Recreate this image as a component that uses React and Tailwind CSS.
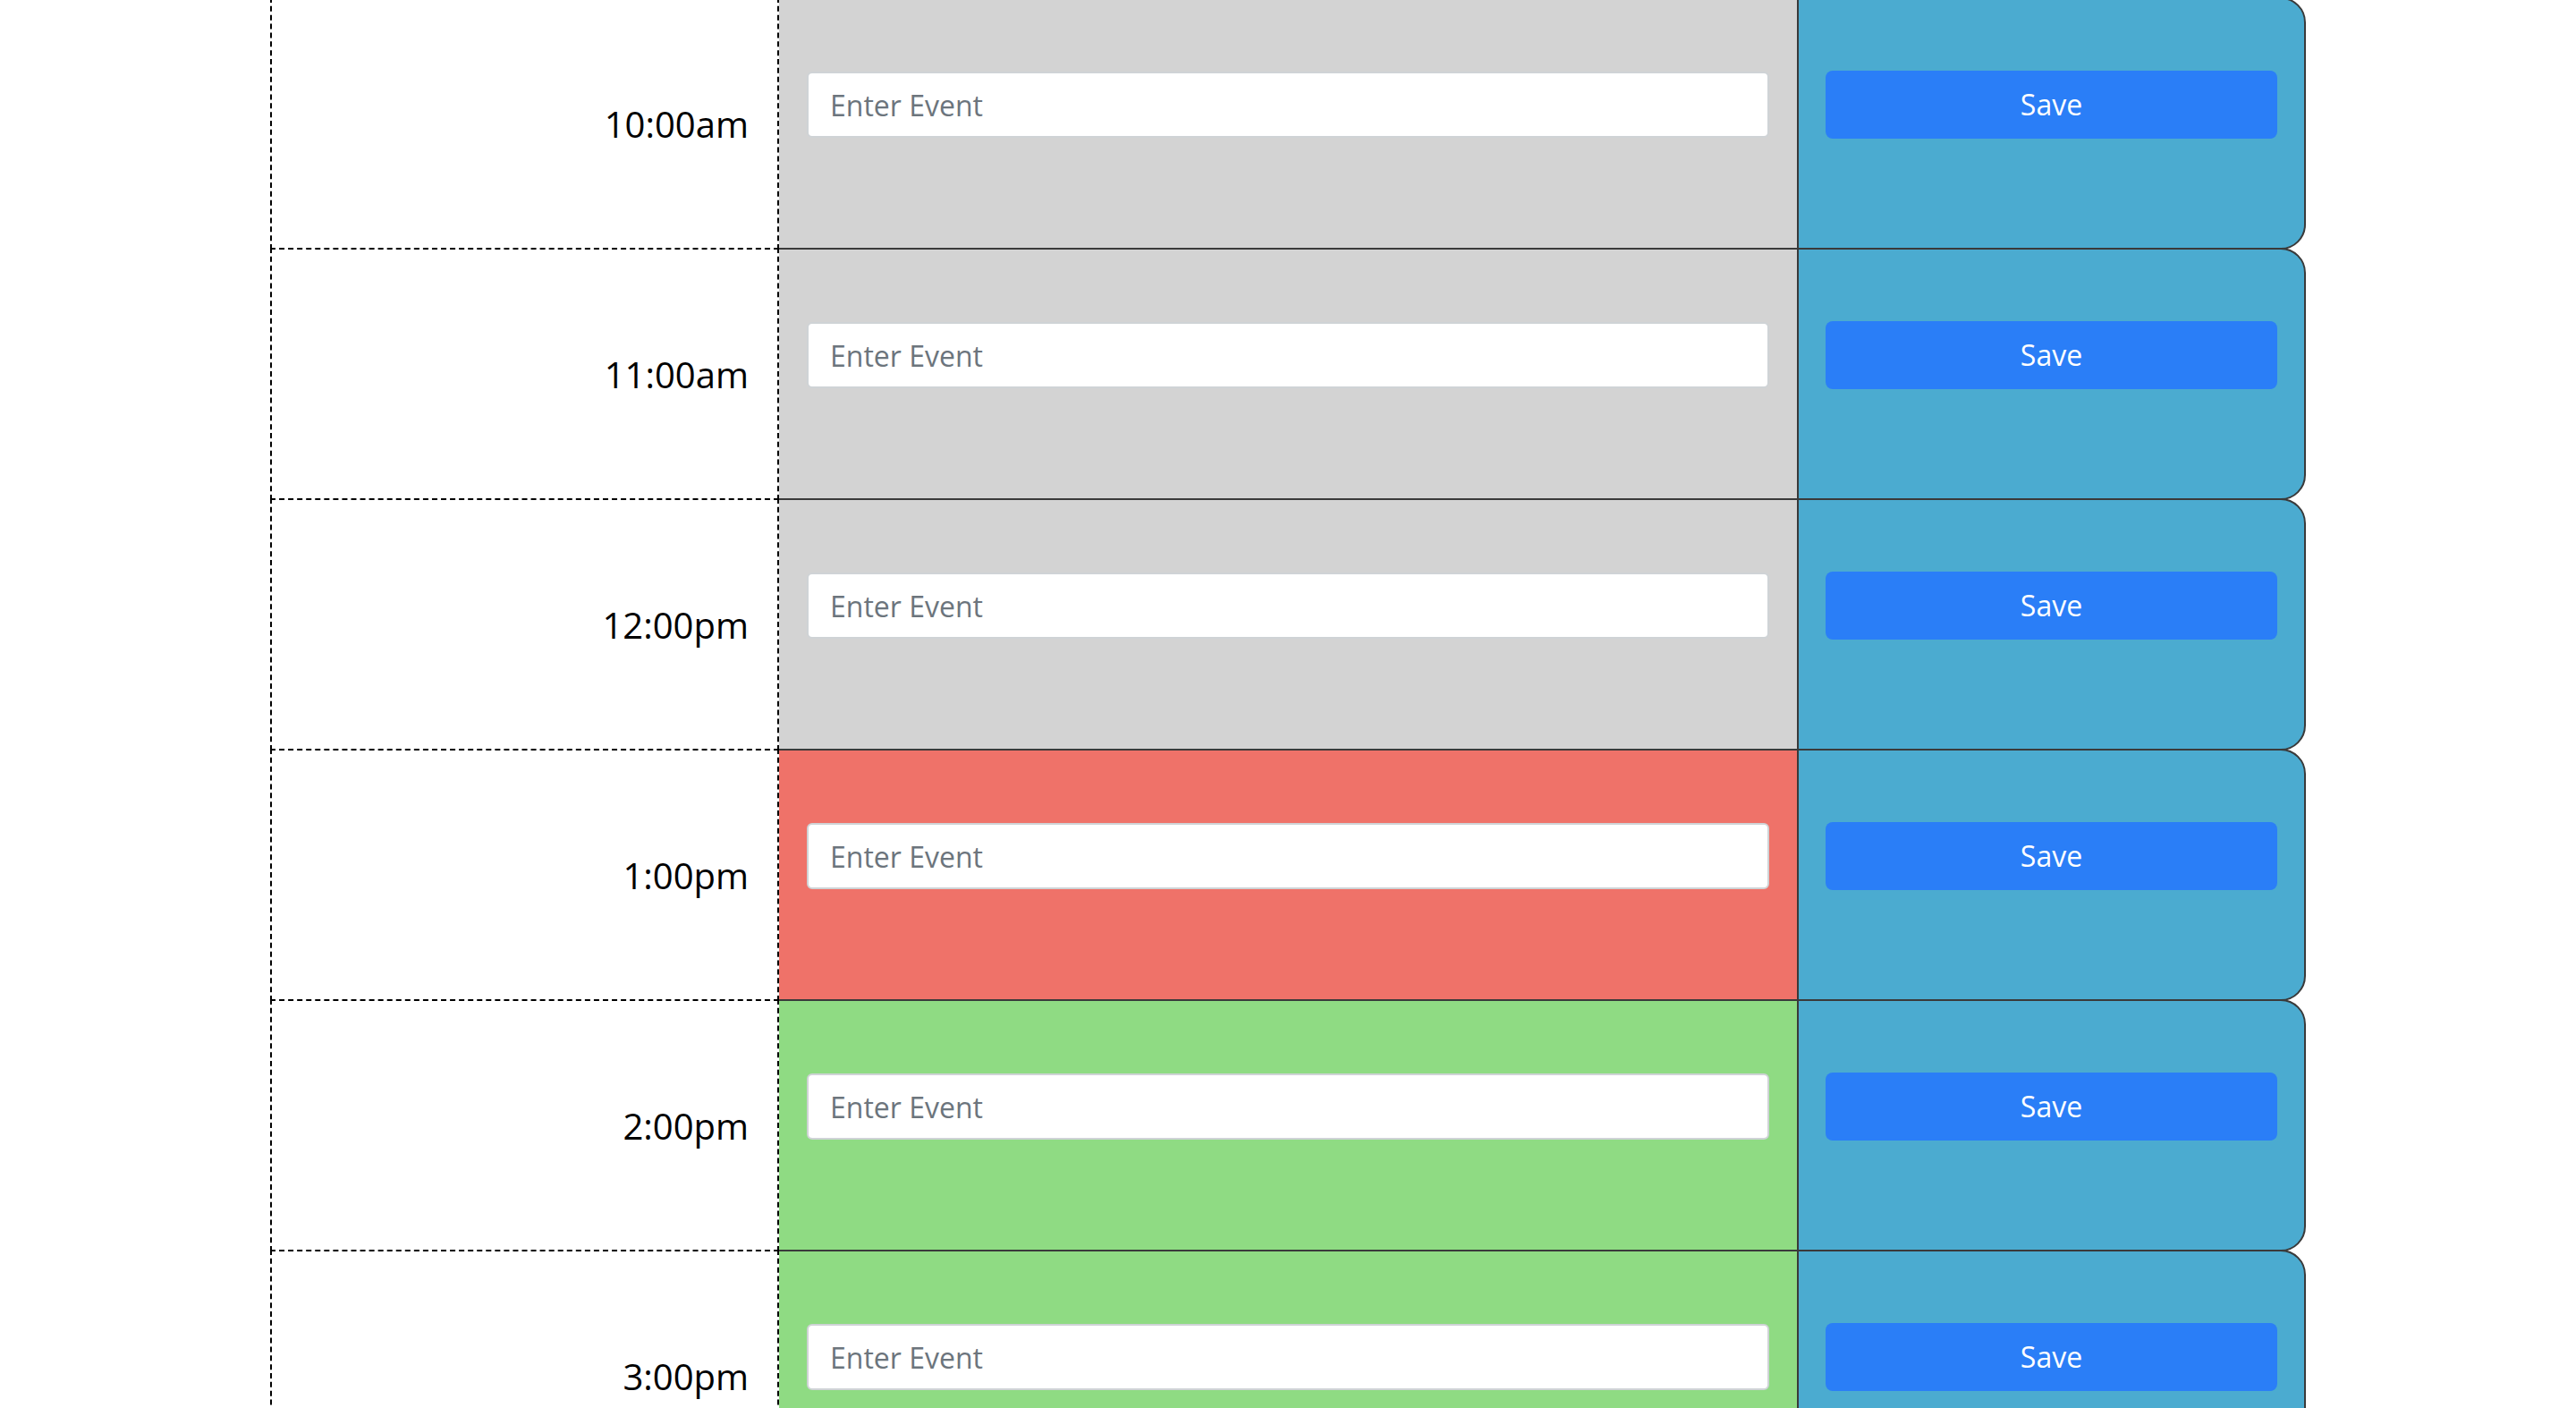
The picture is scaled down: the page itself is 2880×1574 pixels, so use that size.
const hours = [
  { label: "10:00am", tone: "past" },
  { label: "11:00am", tone: "past" },
  { label: "12:00pm", tone: "past" },
  { label: "1:00pm", tone: "present" },
  { label: "2:00pm", tone: "future" },
  { label: "3:00pm", tone: "future" },
];

const toneBg = {
  past: "bg-[#d3d3d3]",
  present: "bg-[#ef7269]",
  future: "bg-[#8fdb83]",
};

function HourRow({ label, tone }) {
  return (
    <div className="grid h-[282px] grid-cols-4 -mt-0.5 first:mt-0">
      <div className="flex items-center justify-end border-x-2 border-t-2 border-dashed border-black bg-white pr-8">
        <span className="text-[40px] leading-none text-black">{label}</span>
      </div>
      <div className={`col-span-2 border-t-2 border-[#3a3a3a] px-[31px] pt-[81px] ${toneBg[tone]}`}>
        <input
          type="text"
          placeholder="Enter Event"
          className="h-[74px] w-full rounded-[6px] border-2 border-[#cfd3d6] bg-white px-6 text-[32px] text-[#495057] outline-none placeholder:text-[#6c757d]"
        />
      </div>
      <div className="rounded-r-[28px] border-2 border-[#3a3a3a] bg-[#4babd0] px-[30px] pt-[80px]">
        <button
          type="button"
          className="h-[76px] w-full rounded-[8px] bg-[#2a7ef7] text-[32px] leading-none text-white"
        >
          Save
        </button>
      </div>
    </div>
  );
}

export default function App() {
  return (
    <div
      className="min-h-screen overflow-hidden bg-white"
      style={{ fontFamily: '"Open Sans", "Noto Sans", sans-serif' }}
    >
      <div className="mx-auto -mt-[3px] flex w-[2276px] flex-col">
        {hours.map((h) => (
          <HourRow key={h.label} {...h} />
        ))}
      </div>
    </div>
  );
}
